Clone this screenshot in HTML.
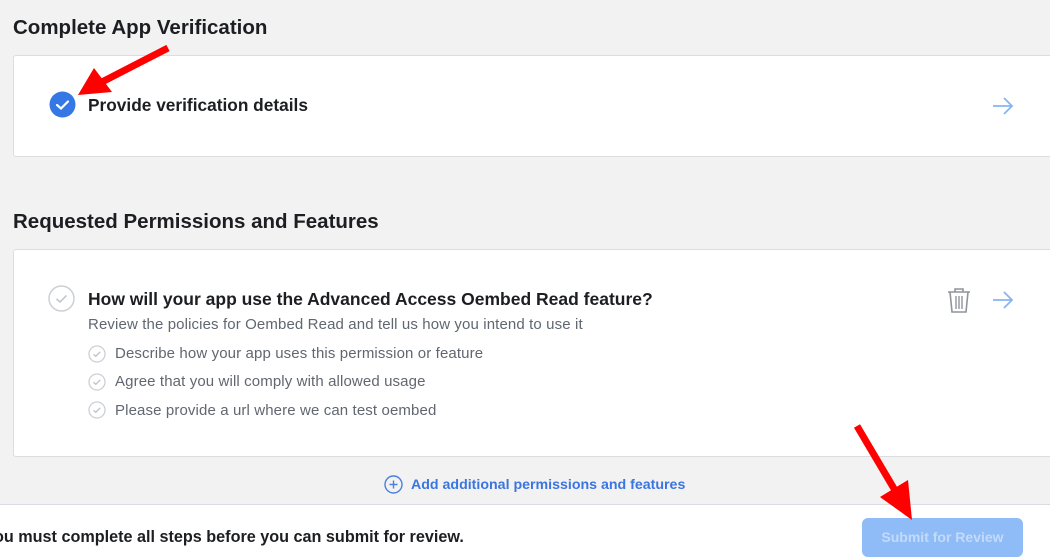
<!DOCTYPE html>
<html><head><meta charset="utf-8">
<style>
*{margin:0;padding:0;box-sizing:border-box}
body{width:1050px;height:560px;overflow:hidden;background:#f2f2f2;font-family:"Liberation Sans",Arial,sans-serif;position:relative;color:#1c1e21}
.h{position:absolute;left:13px;font-size:20.5px;font-weight:bold;color:#1c1e21}
.card{position:absolute;left:13px;width:1050px;background:#fff;border:1px solid #dcdde0;border-radius:3px}
.abs{position:absolute}
.sub{position:absolute;font-size:15px;color:#606770;letter-spacing:0.12px}
</style></head><body>
<div class="h" style="top:16px">Complete App Verification</div>
<div class="card" style="top:55px;height:102px"></div>
<svg class="abs" style="left:49px;top:91px" width="27" height="27"><circle cx="13.5" cy="13.5" r="13" fill="#3578e5"/><path d="M8 14l4 3.5 7-7" stroke="#fff" stroke-width="2.2" fill="none" stroke-linecap="round"/></svg>
<div class="abs" style="left:88px;top:95px;font-size:17.3px;font-weight:bold">Provide verification details</div>
<svg class="abs" style="left:991px;top:96px" width="24" height="20"><path d="M2 10h19M13 2l8 8-8 8" stroke="#8ab4f0" stroke-width="1.8" fill="none"/></svg>

<div class="h" style="top:210px">Requested Permissions and Features</div>
<div class="card" style="top:249px;height:208px"></div>
<svg class="abs" style="left:48px;top:285px" width="27" height="27"><circle cx="13.5" cy="13.5" r="12.5" fill="none" stroke="#ccd0d5" stroke-width="1.5"/><path d="M8.5 14l3.5 3 6.5-6.5" stroke="#bec3c9" stroke-width="1.5" fill="none"/></svg>
<div class="abs" style="left:88px;top:289px;font-size:17.5px;font-weight:bold">How will your app use the Advanced Access Oembed Read feature?</div>
<div class="sub" style="left:88px;top:316px">Review the policies for Oembed Read and tell us how you intend to use it</div>
<svg class="abs" style="left:88px;top:345px" width="18" height="18"><circle cx="9" cy="9" r="8" fill="none" stroke="#ccd0d5" stroke-width="1.3"/><path d="M5.5 9.3l2.3 2 4.5-4.5" stroke="#bec3c9" stroke-width="1.3" fill="none"/></svg>
<div class="sub" style="left:115px;top:345px">Describe how your app uses this permission or feature</div>
<svg class="abs" style="left:88px;top:373px" width="18" height="18"><circle cx="9" cy="9" r="8" fill="none" stroke="#ccd0d5" stroke-width="1.3"/><path d="M5.5 9.3l2.3 2 4.5-4.5" stroke="#bec3c9" stroke-width="1.3" fill="none"/></svg>
<div class="sub" style="left:115px;top:373px">Agree that you will comply with allowed usage</div>
<svg class="abs" style="left:88px;top:401px" width="18" height="18"><circle cx="9" cy="9" r="8" fill="none" stroke="#ccd0d5" stroke-width="1.3"/><path d="M5.5 9.3l2.3 2 4.5-4.5" stroke="#bec3c9" stroke-width="1.3" fill="none"/></svg>
<div class="sub" style="left:115px;top:402px">Please provide a url where we can test oembed</div>
<svg class="abs" style="left:946px;top:286px" width="26" height="28"><path d="M2 6h22M9 6V3h8v3M4 6l2 20h14l2-20" stroke="#90949c" stroke-width="1.6" fill="none"/><path d="M10 10v13M13 10v13M16 10v13" stroke="#90949c" stroke-width="1.4"/></svg>
<svg class="abs" style="left:991px;top:290px" width="24" height="20"><path d="M2 10h19M13 2l8 8-8 8" stroke="#8ab4f0" stroke-width="1.8" fill="none"/></svg>

<svg class="abs" style="left:384px;top:475px" width="19" height="19"><circle cx="9.5" cy="9.5" r="8.5" fill="none" stroke="#4a80e0" stroke-width="1.4"/><path d="M9.5 5.5v8M5.5 9.5h8" stroke="#4a80e0" stroke-width="1.4"/></svg>
<div class="abs" style="left:411px;top:477px;font-size:14.2px;font-weight:bold;color:#3b75e0">Add additional permissions and features</div>

<div class="abs" style="left:0;top:504px;width:1050px;height:56px;background:#fff;border-top:1px solid #dadde1"></div>
<div class="abs" style="left:-6px;top:528px;font-size:16.2px;font-weight:bold">ou must complete all steps before you can submit for review.</div>
<div class="abs" style="left:862px;top:518px;width:161px;height:39px;background:#8fbcf7;border-radius:6px;color:#c4dafa;font-size:14px;font-weight:bold;text-align:center;line-height:39px">Submit for Review</div>

<svg class="abs" style="left:0;top:0" width="1050" height="560">
<path d="M168 48L100 83" stroke="#f00" stroke-width="7"/>
<polygon points="78,95 94,68 112,92" fill="#f00"/>
<path d="M857 426L896 492" stroke="#f00" stroke-width="7"/>
<polygon points="912,520 880,497 908,480" fill="#f00"/>
</svg>
</body></html>
